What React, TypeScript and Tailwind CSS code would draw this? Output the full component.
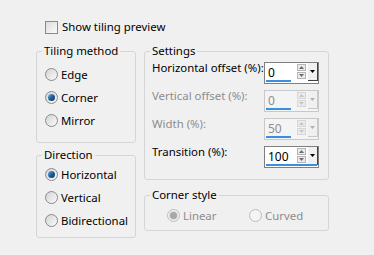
import type { ReactNode } from "react"

const font = { fontFamily: '"Noto Sans", "Open Sans", sans-serif' }

function Radio({ checked, disabled }: { checked?: boolean; disabled?: boolean }) {
  return (
    <span
      className={`flex h-[13px] w-[13px] shrink-0 items-center justify-center rounded-full border ${
        disabled ? "border-[#bcbcbc] bg-[#f4f4f4]" : "border-[#8a8a8a] bg-gradient-to-br from-[#d4d4d4] to-[#fafafa]"
      }`}
    >
      {checked && (
        <span
          className={`block h-[7px] w-[7px] rounded-full ${
            disabled
              ? "bg-[#a8a8a8] ring-1 ring-[#d8d8d8]"
              : "bg-gradient-to-br from-[#6fb1e6] via-[#1f5f97] to-[#0d3a66]"
          }`}
        />
      )}
    </span>
  )
}

function RadioRow({ label, checked, disabled }: { label: string; checked?: boolean; disabled?: boolean }) {
  return (
    <div className="flex h-[23px] items-center gap-[3px]">
      <Radio checked={checked} disabled={disabled} />
      <span className={`whitespace-nowrap ${disabled ? "text-[#8d8d8d]" : "text-black"}`}>{label}</span>
    </div>
  )
}

function Group({ title, className, children }: { title: string; className: string; children: ReactNode }) {
  return (
    <fieldset className={`rounded-[3px] border border-[#d5d5d5] ${className}`}>
      <legend className="ml-[5px] px-[2px] leading-[16px] text-black">{title}</legend>
      {children}
    </fieldset>
  )
}

function Spinner({ value, disabled, full }: { value: string; disabled?: boolean; full?: boolean }) {
  const arrow = disabled ? "#c4c4c4" : "#6b6b6b"
  return (
    <div
      className={`relative mt-[3px] flex h-[22px] w-[55px] shrink-0 items-center border ${
        disabled ? "border-[#c8c8c8] bg-[#f4f4f4]" : "border-[#7f7f7f] bg-white"
      }`}
    >
      <span className={`ml-[3px] w-[28px] text-[12px] leading-[16px] ${disabled ? "text-[#8d8d8d]" : "text-black"}`}>
        {value}
      </span>
      <div className="ml-[1px] mt-[1px] flex h-[15px] w-[9px] flex-col gap-[1px] self-start">
        <div className={`flex h-[7px] items-center justify-center border ${disabled ? "border-[#d6d6d6]" : "border-[#b5b5b5]"} bg-[#ececec]`}>
          <svg width="5" height="3" viewBox="0 0 5 3">
            <path d="M0 3 L2.5 0 L5 3 Z" fill={arrow} />
          </svg>
        </div>
        <div className={`flex h-[7px] items-center justify-center border ${disabled ? "border-[#d6d6d6]" : "border-[#b5b5b5]"} bg-[#ececec]`}>
          <svg width="5" height="3" viewBox="0 0 5 3">
            <path d="M0 0 L2.5 3 L5 0 Z" fill={arrow} />
          </svg>
        </div>
      </div>
      <div
        className={`ml-[2px] flex h-[18px] w-[10px] items-center justify-center self-start border-b border-r bg-[#f0f0f0] ${
          disabled ? "border-[#c8c8c8]" : "border-[#404040]"
        }`}
      >
        <svg width="5" height="3" viewBox="0 0 5 3">
          <path d="M0 0 L2.5 3 L5 0 Z" fill={disabled ? "#b0b0b0" : "#000"} />
        </svg>
      </div>
      <div className={`absolute bottom-[1px] left-[1px] h-[2px] bg-[#3b8ee0] ${full ? "right-[1px]" : "w-[25px]"}`} />
    </div>
  )
}

function SettingRow({ label, value, disabled, full }: { label: string; value: string; disabled?: boolean; full?: boolean }) {
  return (
    <div className="flex h-[28px] items-start justify-between pl-[7px] pr-[9px]">
      <span className={`mt-[1px] whitespace-nowrap ${disabled ? "text-[#8d8d8d]" : "text-black"}`}>{label}</span>
      <Spinner value={value} disabled={disabled} full={full} />
    </div>
  )
}

export default function App() {
  return (
    <div className="h-[255px] w-[374px] bg-[#f0f0f0] text-[11.4px] leading-[16px]" style={font}>
      <div className="flex h-[34px] items-end pl-[45px]">
        <label className="flex h-[14px] items-center gap-[4px]">
          <span className="block h-[13px] w-[13px] border border-[#8a8a8a] bg-gradient-to-br from-[#dcdcdc] to-[#fbfbfb]" />
          <span>Show tiling preview</span>
        </label>
      </div>
      <div className="mt-[9px] flex gap-[8px] pl-[36px]">
        <div className="flex w-[100px] flex-col gap-[4px]">
          <Group title="Tiling method" className="h-[100px]">
            <div className="pl-[8px] pt-[4px]">
              <RadioRow label="Edge" />
              <RadioRow label="Corner" checked />
              <RadioRow label="Mirror" />
            </div>
          </Group>
          <Group title="Direction" className="h-[91px]">
            <div className="pl-[8px]">
              <RadioRow label="Horizontal" checked />
              <RadioRow label="Vertical" />
              <RadioRow label="Bidirectional" />
            </div>
          </Group>
        </div>
        <div className="flex w-[185px] flex-col gap-[7px]">
          <Group title="Settings" className="h-[137px]">
            <SettingRow label="Horizontal offset (%):" value="0" />
            <SettingRow label="Vertical offset (%):" value="0" disabled />
            <SettingRow label="Width (%):" value="50" disabled />
            <SettingRow label="Transition (%):" value="100" full />
          </Group>
          <Group title="Corner style" className="h-[44px]">
            <div className="flex pl-[22px] pt-[1px]">
              <div className="w-[82px]">
                <RadioRow label="Linear" checked disabled />
              </div>
              <RadioRow label="Curved" disabled />
            </div>
          </Group>
        </div>
      </div>
    </div>
  )
}
